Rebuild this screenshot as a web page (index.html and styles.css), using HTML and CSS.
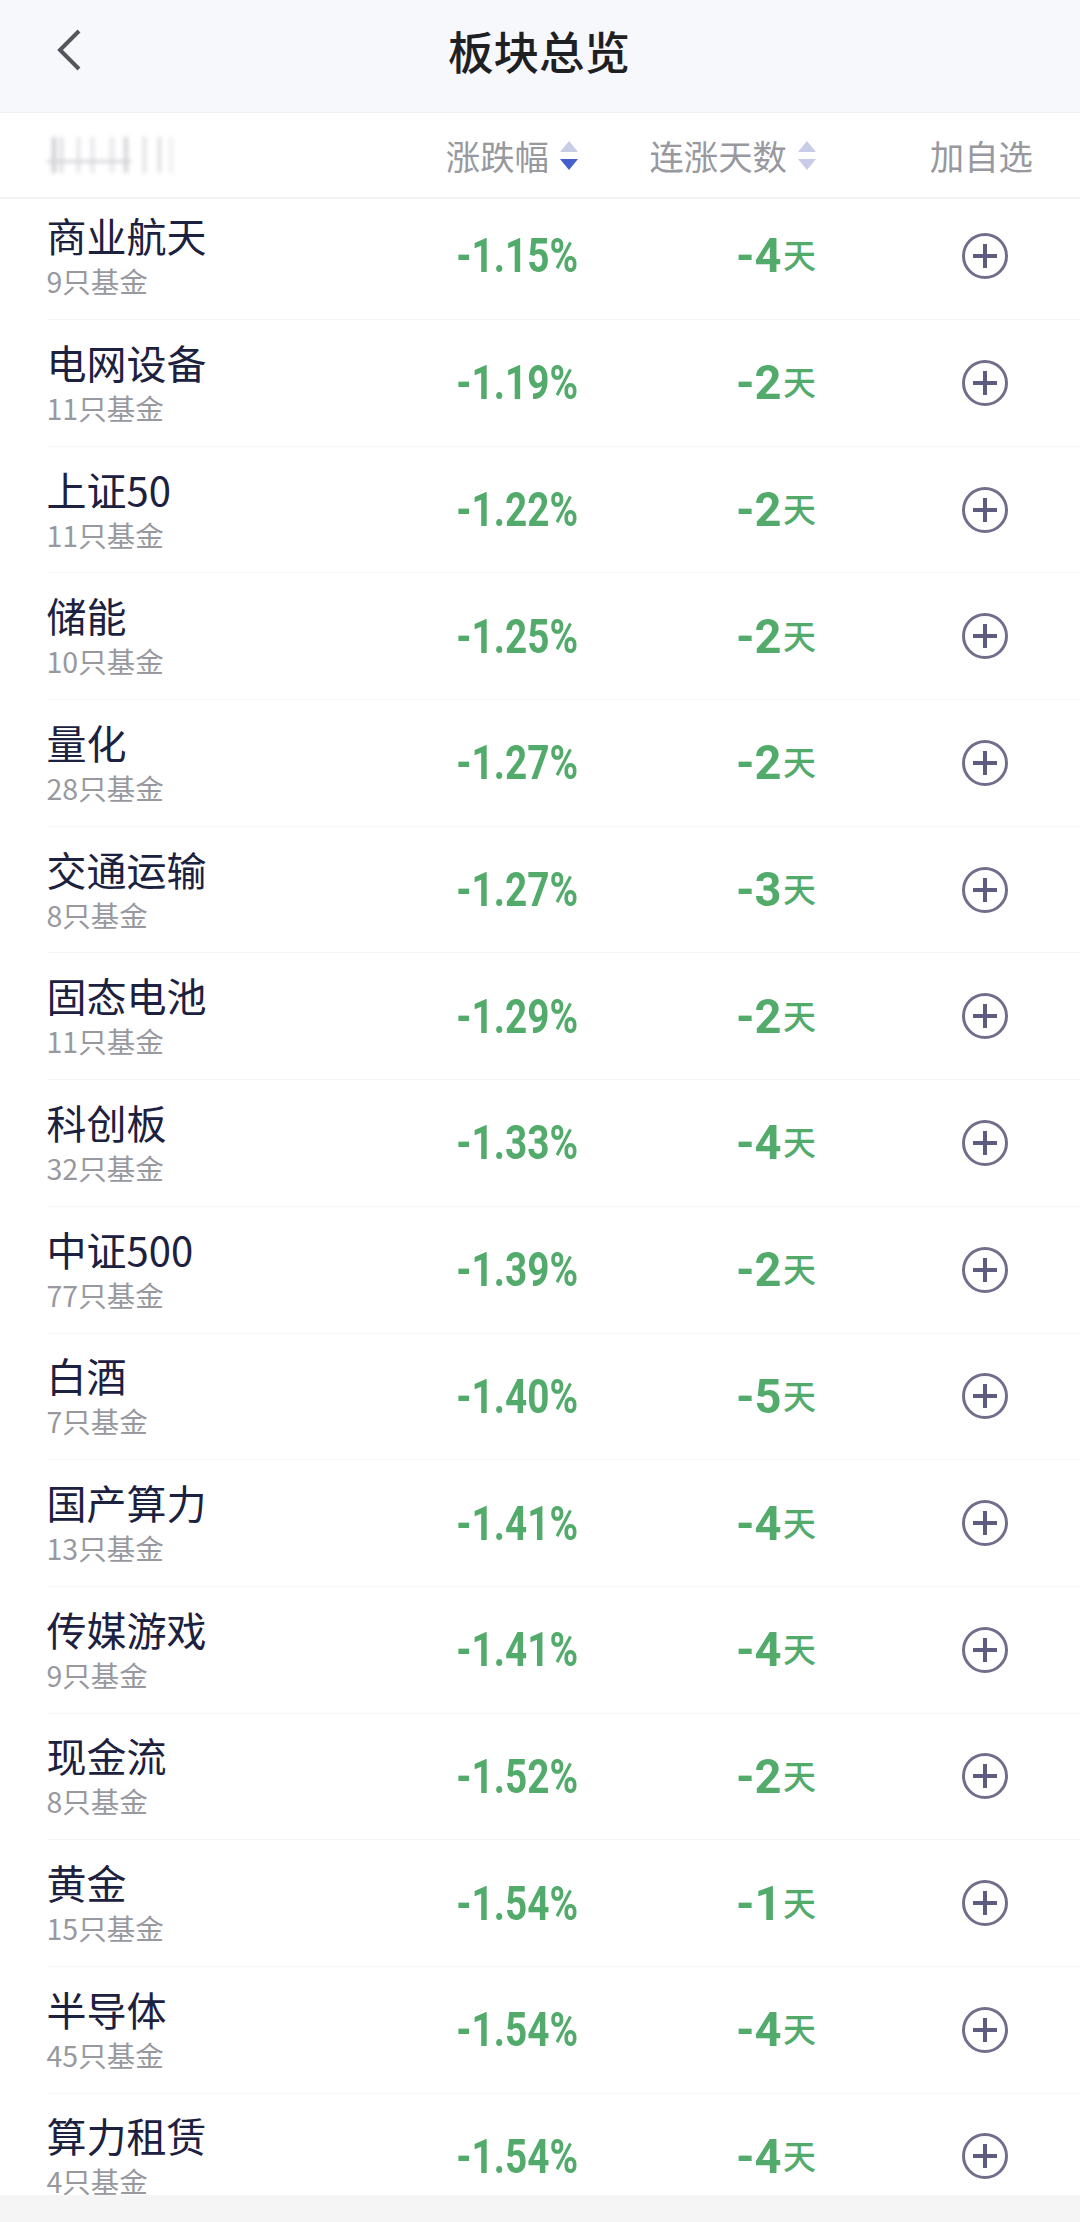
FILE: index.html
```html
<!DOCTYPE html>
<html lang="zh-CN">
<head>
    <meta charset="UTF-8">
    <meta name="viewport" content="width=device-width, initial-scale=1.0">
    <title>板块总览</title>
    <link rel="stylesheet" href="styles.css">
</head>
<body>
    <!-- 顶部导航 -->
    <header class="nav">
        <svg class="nav-back" width="26" height="44" viewBox="0 0 26 44"><path d="M23 3 L4 22 L23 41" /></svg>
        <h1 class="nav-title">板块总览</h1>
    </header>

    <!-- 表头 -->
    <div class="table-head">
        <div class="head-blur"></div>
        <div class="head-col">涨跌幅
            <span class="sort"><i class="sort-up"></i><i class="sort-down active"></i></span>
        </div>
        <div class="head-col">连涨天数
            <span class="sort"><i class="sort-up"></i><i class="sort-down"></i></span>
        </div>
        <div class="head-col head-add">加自选</div>
    </div>

    <!-- 板块列表 -->
    <main class="list">
        <div class="row">
            <div class="name"><div class="title">商业航天</div><div class="count">9只基金</div></div>
            <div class="pct"><b>-1.15%</b></div>
            <div class="days"><b>-4</b><span>天</span></div>
            <div class="add"><svg viewBox="0 0 46 46"><circle cx="23" cy="23" r="21.5"/><path d="M11 23 H35 M23 11 V35"/></svg></div>
        </div>
        <div class="row">
            <div class="name"><div class="title">电网设备</div><div class="count">11只基金</div></div>
            <div class="pct"><b>-1.19%</b></div>
            <div class="days"><b>-2</b><span>天</span></div>
            <div class="add"><svg viewBox="0 0 46 46"><circle cx="23" cy="23" r="21.5"/><path d="M11 23 H35 M23 11 V35"/></svg></div>
        </div>
        <div class="row">
            <div class="name"><div class="title">上证50</div><div class="count">11只基金</div></div>
            <div class="pct"><b>-1.22%</b></div>
            <div class="days"><b>-2</b><span>天</span></div>
            <div class="add"><svg viewBox="0 0 46 46"><circle cx="23" cy="23" r="21.5"/><path d="M11 23 H35 M23 11 V35"/></svg></div>
        </div>
        <div class="row">
            <div class="name"><div class="title">储能</div><div class="count">10只基金</div></div>
            <div class="pct"><b>-1.25%</b></div>
            <div class="days"><b>-2</b><span>天</span></div>
            <div class="add"><svg viewBox="0 0 46 46"><circle cx="23" cy="23" r="21.5"/><path d="M11 23 H35 M23 11 V35"/></svg></div>
        </div>
        <div class="row">
            <div class="name"><div class="title">量化</div><div class="count">28只基金</div></div>
            <div class="pct"><b>-1.27%</b></div>
            <div class="days"><b>-2</b><span>天</span></div>
            <div class="add"><svg viewBox="0 0 46 46"><circle cx="23" cy="23" r="21.5"/><path d="M11 23 H35 M23 11 V35"/></svg></div>
        </div>
        <div class="row">
            <div class="name"><div class="title">交通运输</div><div class="count">8只基金</div></div>
            <div class="pct"><b>-1.27%</b></div>
            <div class="days"><b>-3</b><span>天</span></div>
            <div class="add"><svg viewBox="0 0 46 46"><circle cx="23" cy="23" r="21.5"/><path d="M11 23 H35 M23 11 V35"/></svg></div>
        </div>
        <div class="row">
            <div class="name"><div class="title">固态电池</div><div class="count">11只基金</div></div>
            <div class="pct"><b>-1.29%</b></div>
            <div class="days"><b>-2</b><span>天</span></div>
            <div class="add"><svg viewBox="0 0 46 46"><circle cx="23" cy="23" r="21.5"/><path d="M11 23 H35 M23 11 V35"/></svg></div>
        </div>
        <div class="row">
            <div class="name"><div class="title">科创板</div><div class="count">32只基金</div></div>
            <div class="pct"><b>-1.33%</b></div>
            <div class="days"><b>-4</b><span>天</span></div>
            <div class="add"><svg viewBox="0 0 46 46"><circle cx="23" cy="23" r="21.5"/><path d="M11 23 H35 M23 11 V35"/></svg></div>
        </div>
        <div class="row">
            <div class="name"><div class="title">中证500</div><div class="count">77只基金</div></div>
            <div class="pct"><b>-1.39%</b></div>
            <div class="days"><b>-2</b><span>天</span></div>
            <div class="add"><svg viewBox="0 0 46 46"><circle cx="23" cy="23" r="21.5"/><path d="M11 23 H35 M23 11 V35"/></svg></div>
        </div>
        <div class="row">
            <div class="name"><div class="title">白酒</div><div class="count">7只基金</div></div>
            <div class="pct"><b>-1.40%</b></div>
            <div class="days"><b>-5</b><span>天</span></div>
            <div class="add"><svg viewBox="0 0 46 46"><circle cx="23" cy="23" r="21.5"/><path d="M11 23 H35 M23 11 V35"/></svg></div>
        </div>
        <div class="row">
            <div class="name"><div class="title">国产算力</div><div class="count">13只基金</div></div>
            <div class="pct"><b>-1.41%</b></div>
            <div class="days"><b>-4</b><span>天</span></div>
            <div class="add"><svg viewBox="0 0 46 46"><circle cx="23" cy="23" r="21.5"/><path d="M11 23 H35 M23 11 V35"/></svg></div>
        </div>
        <div class="row">
            <div class="name"><div class="title">传媒游戏</div><div class="count">9只基金</div></div>
            <div class="pct"><b>-1.41%</b></div>
            <div class="days"><b>-4</b><span>天</span></div>
            <div class="add"><svg viewBox="0 0 46 46"><circle cx="23" cy="23" r="21.5"/><path d="M11 23 H35 M23 11 V35"/></svg></div>
        </div>
        <div class="row">
            <div class="name"><div class="title">现金流</div><div class="count">8只基金</div></div>
            <div class="pct"><b>-1.52%</b></div>
            <div class="days"><b>-2</b><span>天</span></div>
            <div class="add"><svg viewBox="0 0 46 46"><circle cx="23" cy="23" r="21.5"/><path d="M11 23 H35 M23 11 V35"/></svg></div>
        </div>
        <div class="row">
            <div class="name"><div class="title">黄金</div><div class="count">15只基金</div></div>
            <div class="pct"><b>-1.54%</b></div>
            <div class="days"><b>-1</b><span>天</span></div>
            <div class="add"><svg viewBox="0 0 46 46"><circle cx="23" cy="23" r="21.5"/><path d="M11 23 H35 M23 11 V35"/></svg></div>
        </div>
        <div class="row">
            <div class="name"><div class="title">半导体</div><div class="count">45只基金</div></div>
            <div class="pct"><b>-1.54%</b></div>
            <div class="days"><b>-4</b><span>天</span></div>
            <div class="add"><svg viewBox="0 0 46 46"><circle cx="23" cy="23" r="21.5"/><path d="M11 23 H35 M23 11 V35"/></svg></div>
        </div>
        <div class="row">
            <div class="name"><div class="title">算力租赁</div><div class="count">4只基金</div></div>
            <div class="pct"><b>-1.54%</b></div>
            <div class="days"><b>-4</b><span>天</span></div>
            <div class="add"><svg viewBox="0 0 46 46"><circle cx="23" cy="23" r="21.5"/><path d="M11 23 H35 M23 11 V35"/></svg></div>
        </div>
    </main>

    <div class="bottom-bar"></div>
</body>
</html>
```

FILE: styles.css
```css
/* 页面 */
html, body {
    height: 100%;
}

body {
    margin: 0;
    display: flex;
    flex-direction: column;
    overflow: hidden;
    background-color: #fff;
    font-family: "Noto Sans CJK SC", "Noto Sans", sans-serif;
}

/* 顶部导航 */
.nav {
    flex: none;
    height: 113px;
    box-sizing: border-box;
    padding-left: 56px;
    display: flex;
    align-items: center;
    background-color: #f6f8fc;
    border-bottom: 1px solid #eff1f5;
}

.nav-back {
    margin-bottom: 13px;
    fill: none;
    stroke: #54565e;
    stroke-width: 4;
}

.nav-title {
    margin: 0 0 12px 366px;
    font-size: 45.5px;
    font-weight: 500;
    color: #1f2024;
}

/* 表头 */
.table-head {
    flex: none;
    height: 86px;
    box-sizing: border-box;
    display: grid;
    grid-template-columns: 293px 238px 238px 1fr;
    padding-left: 47px;
    align-items: center;
    font-size: 34.4px;
    color: #97999f;
    border-bottom: 2px solid #f2f3f5;
}

/* 打码的标题 */
.head-blur {
    width: 128px;
    height: 36px;
    background:
        linear-gradient(#d4d4d8, #d4d4d8) 0 23px / 84px 3px no-repeat,
        linear-gradient(#cacace, #cacace) 5px 0 / 4px 100% no-repeat,
        linear-gradient(#d6d6da, #d6d6da) 13px 0 / 3px 100% no-repeat,
        linear-gradient(#dedee2, #dedee2) 30px 0 / 3px 100% no-repeat,
        linear-gradient(#dedee2, #dedee2) 44px 0 / 3px 100% no-repeat,
        linear-gradient(#e6e6ea, #e6e6ea) 63px 0 / 4px 100% no-repeat,
        linear-gradient(#d2d2d6, #d2d2d6) 77px 0 / 4px 100% no-repeat,
        linear-gradient(#dadade, #dadade) 96px 0 / 3px 100% no-repeat,
        linear-gradient(#d6d6da, #d6d6da) 111px 0 / 3px 100% no-repeat,
        linear-gradient(#eeeef0, #eeeef0) 122px 0 / 4px 100% no-repeat;
    filter: blur(2.2px);
}

.head-col {
    display: flex;
    align-items: center;
    justify-content: flex-end;
    gap: 11px;
}

.head-add {
    padding-right: 47px;
}

.sort {
    display: flex;
    flex-direction: column;
    gap: 7px;
}

.sort i {
    display: block;
    width: 0;
    height: 0;
    border-left: 9px solid transparent;
    border-right: 9px solid transparent;
}

.sort-up {
    border-bottom: 11px solid #c9cce6;
}

.sort-down {
    border-top: 11px solid #c9cce6;
}

.sort-down.active {
    border-top-color: #4460cc;
}

/* 列表 */
.list {
    flex: 1;
    min-height: 0;
    overflow: hidden;
}

.row {
    height: 126.7px;
    box-sizing: border-box;
    display: grid;
    grid-template-columns: 293px 238px 238px 1fr;
    align-items: center;
    margin-left: 47px;
    border-bottom: 1px solid #f5f6f8;
}

.row:first-child {
    height: 121px;
    padding-bottom: 7px;
}

.name {
    margin-left: -0.5px;
}

.title {
    font-size: 40px;
    line-height: 49px;
    color: #1d2140;
}

.count {
    font-size: 28.5px;
    line-height: 41px;
    color: #97999f;
}

.pct,
.days {
    display: flex;
    align-items: center;
    justify-content: flex-end;
    color: #52ab6b;
}

/* 没有 DIN 窄体，数字横向压缩来接近 */
.pct b,
.days b {
    font-family: Roboto, sans-serif;
    font-size: 49px;
    font-weight: 700;
    transform: scaleX(0.79);
    transform-origin: right center;
}

.days b {
    transform: scaleX(0.96);
}

.days span {
    margin: -3px 0 0 2px;
    font-size: 33px;
    font-weight: 500;
}

.add {
    display: flex;
    justify-content: flex-end;
    padding-right: 72px;
}

.add svg {
    width: 46px;
    height: 46px;
    fill: none;
    stroke: #706e8a;
    stroke-width: 3;
}

.add path {
    stroke: #5d5b80;
    stroke-width: 4;
}

/* 底部灰条 */
.bottom-bar {
    flex: none;
    height: 27px;
    background-color: #f5f5f5;
}
```
